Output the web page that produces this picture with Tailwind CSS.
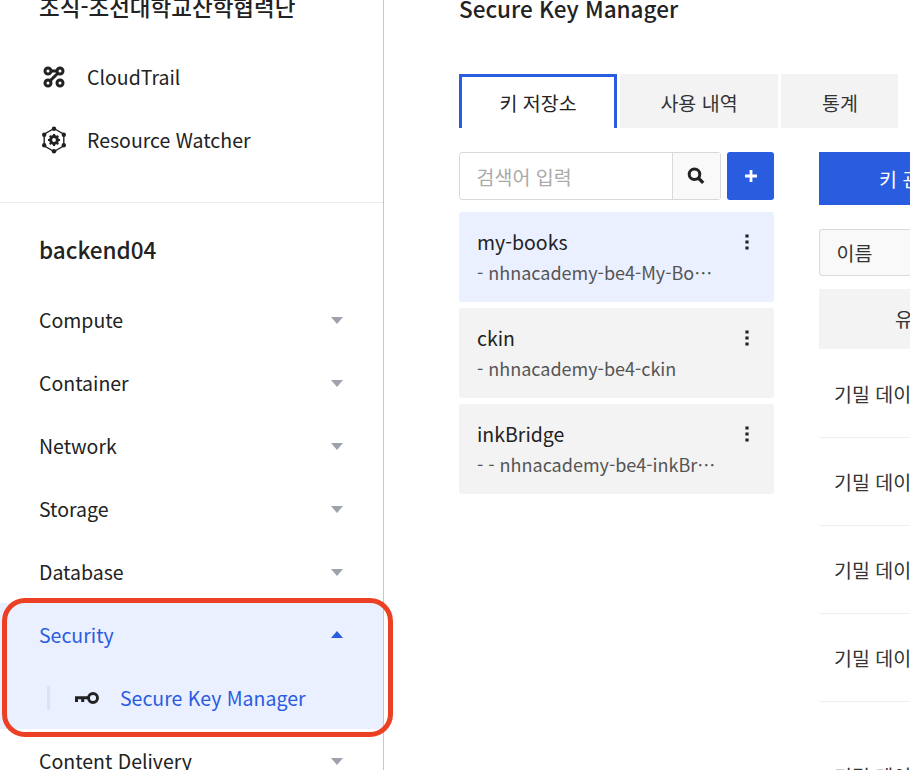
<!DOCTYPE html>
<html lang="ko">
<head>
<meta charset="utf-8">
<title>Secure Key Manager</title>
<script src="https://cdn.jsdelivr.net/npm/@tailwindcss/browser@4"></script>
</head>
<body class="relative flex h-[770px] w-[910px] overflow-hidden bg-white font-['Noto_Sans_CJK_KR',sans-serif] whitespace-nowrap text-[#222]">
  <nav class="flex h-[770px] w-[384px] shrink-0 flex-col overflow-hidden border-r border-[#c6c6c8] text-[19.5px] leading-[30px]">
    <div class="h-[203px] shrink-0 border-b border-[#ebebeb]">
      <h2 class="-mt-[10px] mb-[22px] h-[33px] pl-[39px] text-[22.5px] leading-[33px] font-medium">조직-조선대학교산학협력단</h2>
      <a class="flex h-[63px] items-center pl-[42px]">
        <svg class="mr-[21px] h-6 w-6" viewBox="0 0 24 24" fill="none" stroke="#222" stroke-width="3"><circle cx="6" cy="6" r="3"/><circle cx="18" cy="6" r="3"/><circle cx="6" cy="18" r="3"/><circle cx="18" cy="18" r="3"/><path d="M9 6h6M8.2 15.8l7.6-7.6"/></svg>
        <span>CloudTrail</span>
      </a>
      <a class="flex h-[63px] items-center pl-[41px]">
        <svg class="mr-[20px] h-[28px] w-[26px]" viewBox="0 0 26 28"><path d="M13 2.5 22.8 8.2V19.8L13 25.5 3.2 19.8V8.2z" fill="none" stroke="#222" stroke-width="1.4"/><g fill="#222"><circle cx="13" cy="2.8" r="2.2"/><circle cx="22.8" cy="8.7" r="2.2"/><circle cx="22.8" cy="19.2" r="2.2"/><circle cx="13" cy="25.2" r="2.2"/><circle cx="3.2" cy="19.2" r="2.2"/><circle cx="3.2" cy="8.7" r="2.2"/></g><g stroke="#222" fill="none"><circle cx="13" cy="14" r="3.4" stroke-width="3"/><path stroke-width="2.2" d="M13 8v2M13 18v2M7 14h2M17 14h2M8.8 9.8l1.4 1.4M15.8 16.8l1.4 1.4M8.8 18.2l1.4-1.4M15.8 11.2l1.4-1.4"/></g></svg>
        <span>Resource Watcher</span>
      </a>
    </div>
    <h2 class="flex h-[85px] shrink-0 items-center pb-[9px] pl-[39px] pt-[15px] text-[22.5px] leading-9 font-medium"><span>backend04</span></h2>
    <a class="flex h-[63px] shrink-0 items-center justify-between pr-[40px] pl-[39px]"><span>Compute</span><svg class="mt-[2px] h-[7px] w-3" viewBox="0 0 12 7"><path d="M0 0h12L6 7z" fill="#9ea2ac"/></svg></a>
    <a class="flex h-[63px] shrink-0 items-center justify-between pr-[40px] pl-[39px]"><span>Container</span><svg class="mt-[2px] h-[7px] w-3" viewBox="0 0 12 7"><path d="M0 0h12L6 7z" fill="#9ea2ac"/></svg></a>
    <a class="flex h-[63px] shrink-0 items-center justify-between pr-[40px] pl-[39px]"><span>Network</span><svg class="mt-[2px] h-[7px] w-3" viewBox="0 0 12 7"><path d="M0 0h12L6 7z" fill="#9ea2ac"/></svg></a>
    <a class="flex h-[63px] shrink-0 items-center justify-between pr-[40px] pl-[39px]"><span>Storage</span><svg class="mt-[2px] h-[7px] w-3" viewBox="0 0 12 7"><path d="M0 0h12L6 7z" fill="#9ea2ac"/></svg></a>
    <a class="flex h-[63px] shrink-0 items-center justify-between pr-[40px] pl-[39px]"><span>Database</span><svg class="mt-[2px] h-[7px] w-3" viewBox="0 0 12 7"><path d="M0 0h12L6 7z" fill="#9ea2ac"/></svg></a>
    <div class="h-[126px] shrink-0 bg-[#eaf0ff] text-[#2a5cdf]">
      <a class="flex h-[63px] items-center justify-between pr-[40px] pl-[39px]"><span>Security</span><svg class="h-[7px] w-3" viewBox="0 0 12 7"><path d="M0 7h12L6 0z" fill="#2a5cdf"/></svg></a>
      <a class="flex h-[63px] items-center pl-[47px]">
        <i class="h-6 w-[3px] bg-[#dce2f0]"></i>
        <svg class="mr-[21px] ml-[25px] h-3 w-6" viewBox="0 0 24 12"><circle cx="18" cy="6" r="4.5" fill="none" stroke="#222" stroke-width="2.9"/><path d="M0 4.3h13v2.9H9.2V10H6.2V7.2H3V10H0z" fill="#222"/></svg>
        <span>Secure Key Manager</span>
      </a>
    </div>
    <a class="flex h-[63px] shrink-0 items-center justify-between pr-[40px] pl-[39px]"><span>Content Delivery</span><svg class="mt-[2px] h-[7px] w-3" viewBox="0 0 12 7"><path d="M0 0h12L6 7z" fill="#9ea2ac"/></svg></a>
  </nav>

  <main class="w-[526px] shrink-0 overflow-hidden pl-[75px] text-[19.5px] leading-[30px]">
    <h1 class="-mt-[10px] h-9 text-[22.5px] leading-9 font-medium">Secure Key Manager</h1>
    <div class="mt-[48px] flex h-[54px] gap-[3px] text-[#333]">
      <div class="flex w-[158px] items-center justify-center border-x-3 border-t-3 border-[#2a5cdf] text-[#222]"><span>키 저장소</span></div>
      <div class="flex w-[158px] items-center justify-center bg-[#f3f3f3] pt-[3px]"><span>사용 내역</span></div>
      <div class="flex w-[117px] items-center justify-center bg-[#f3f3f3] pt-[3px] pl-px"><span>통계</span></div>
    </div>
    <div class="mt-6 flex gap-[45px]">
      <section class="w-[315px] shrink-0">
        <div class="flex h-12 gap-[6px]">
          <div class="flex w-[262px] rounded-[3px] border border-[#d9d9d9]">
            <div class="flex flex-1 items-center pt-[2px] pl-[16.5px] text-[#aaa]"><span>검색어 입력</span></div>
            <div class="flex w-[48px] items-center justify-center border-l border-[#d9d9d9] bg-[#f9f9f9] pr-px">
              <svg class="h-[18px] w-[18px]" viewBox="0 0 18 18" fill="none" stroke="#222"><circle cx="7.5" cy="7.2" r="5.3" stroke-width="3"/><path d="m11.4 11.1 4.8 4.8" stroke-width="3.4"/></svg>
            </div>
          </div>
          <div class="flex flex-1 items-center justify-center rounded-[3px] bg-[#2a5cdf]"><svg class="h-3 w-3" viewBox="0 0 12 12"><path d="M6 0v12M0 6h12" stroke="#fff" stroke-width="2.8"/></svg></div>
        </div>
        <div class="mt-3 flex flex-col gap-[6px]">
          <article class="flex h-[90px] justify-between rounded-[3px] bg-[#eaf0ff] pt-[15px] pl-[18px]">
            <div><h3>my-books</h3><p class="text-[18px] text-[#555]">- nhnacademy-be4-My-Bo…</p></div>
            <svg class="mt-[7px] mr-[25px] h-4 w-1" viewBox="0 0 4 16" fill="#222"><path d="M.4.4h3.2v3.2H.4zM.4 6.4h3.2v3.2H.4zM.4 12.4h3.2v3.2H.4z"/></svg>
          </article>
          <article class="flex h-[90px] justify-between rounded-[3px] bg-[#f3f3f3] pt-[15px] pl-[18px]">
            <div><h3>ckin</h3><p class="text-[18px] text-[#555]">- nhnacademy-be4-ckin</p></div>
            <svg class="mt-[7px] mr-[25px] h-4 w-1" viewBox="0 0 4 16" fill="#222"><path d="M.4.4h3.2v3.2H.4zM.4 6.4h3.2v3.2H.4zM.4 12.4h3.2v3.2H.4z"/></svg>
          </article>
          <article class="flex h-[90px] justify-between rounded-[3px] bg-[#f3f3f3] pt-[15px] pl-[18px]">
            <div><h3>inkBridge</h3><p class="text-[18px] text-[#555]">- - nhnacademy-be4-inkBr…</p></div>
            <svg class="mt-[7px] mr-[25px] h-4 w-1" viewBox="0 0 4 16" fill="#222"><path d="M.4.4h3.2v3.2H.4zM.4 6.4h3.2v3.2H.4zM.4 12.4h3.2v3.2H.4z"/></svg>
          </article>
        </div>
      </section>
      <section class="w-[400px] shrink-0 text-[#333]">
        <div class="flex h-[53px] items-center bg-[#2a5cdf] pl-[60px] text-white"><span>키 관리</span></div>
        <div class="mt-6 flex h-[47px] items-center rounded-[3px] border border-[#d9d9d9] bg-[#f9f9f9] pl-[16.5px]"><span>이름</span></div>
        <div class="mt-[13px] flex h-[60px] items-center bg-[#f3f3f3] pl-[76px]"><span>유형</span></div>
        <div class="flex h-[89px] items-center border-b border-[#f0f0f0] pt-[2px] pl-[15px]"><span>기밀 데이터</span></div>
        <div class="flex h-[88px] items-center border-b border-[#f0f0f0] pl-[15px]"><span>기밀 데이터</span></div>
        <div class="flex h-[88px] items-center border-b border-[#f0f0f0] pl-[15px]"><span>기밀 데이터</span></div>
        <div class="flex h-[88px] items-center border-b border-[#f0f0f0] pl-[15px]"><span>기밀 데이터</span></div>
        <div class="flex h-[148px] items-center pl-[15px]"><span>기밀 데이터</span></div>
      </section>
    </div>
  </main>

  <div class="absolute top-[598px] left-[2px] h-[139px] w-[391px] rounded-[23px] border-5 border-[#ec4024]"></div>
</body>
</html>
